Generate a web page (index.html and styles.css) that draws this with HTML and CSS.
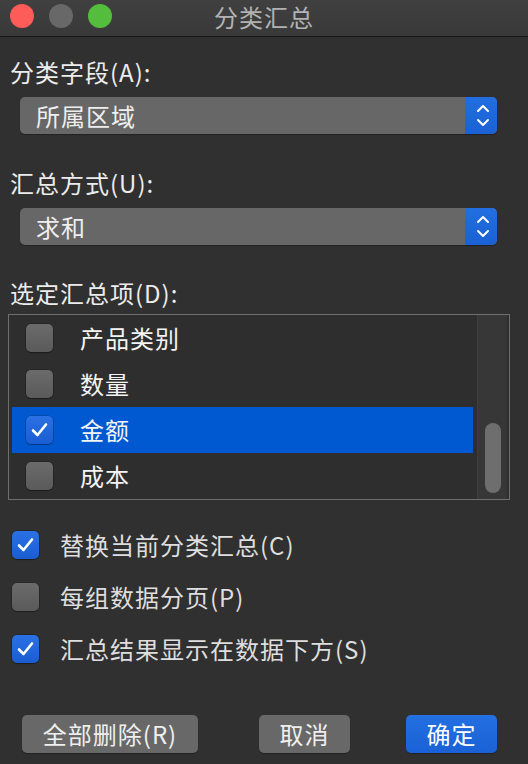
FILE: index.html
```html
<!DOCTYPE html>
<html lang="zh-CN">
<head>
<meta charset="utf-8">
<title>分类汇总</title>
<link rel="stylesheet" href="styles.css">
</head>
<body>
<div class="window">
  <div class="titlebar">
    <div class="lights">
      <span class="light red"></span>
      <span class="light gray"></span>
      <span class="light green"></span>
    </div>
    <div class="title">分类汇总</div>
  </div>
  <div class="content">
    <div class="label l1">分类字段(A):</div>
    <div class="select">
      <span class="select-text">所属区域</span>
      <span class="stepper">
        <svg width="32" height="37" viewBox="0 0 32 37"><polyline points="13,14 18,9 23,14" fill="none" stroke="#fff" stroke-width="2" stroke-linecap="round" stroke-linejoin="round"/><polyline points="13,23 18,28 23,23" fill="none" stroke="#fff" stroke-width="2" stroke-linecap="round" stroke-linejoin="round"/></svg>
      </span>
    </div>
    <div class="label l2">汇总方式(U):</div>
    <div class="select">
      <span class="select-text">求和</span>
      <span class="stepper">
        <svg width="32" height="37" viewBox="0 0 32 37"><polyline points="13,14 18,9 23,14" fill="none" stroke="#fff" stroke-width="2" stroke-linecap="round" stroke-linejoin="round"/><polyline points="13,23 18,28 23,23" fill="none" stroke="#fff" stroke-width="2" stroke-linecap="round" stroke-linejoin="round"/></svg>
      </span>
    </div>
    <div class="label l3">选定汇总项(D):</div>
    <div class="list">
      <div class="rows">
        <div class="row"><span class="cb"></span><span class="row-text">产品类别</span></div>
        <div class="row"><span class="cb"></span><span class="row-text">数量</span></div>
        <div class="row selected"><span class="cb checked"><svg width="27" height="28" viewBox="0 0 27 28"><polyline points="7,14.5 11.5,19 20,8.5" fill="none" stroke="#fff" stroke-width="2.6" stroke-linecap="round" stroke-linejoin="round"/></svg></span><span class="row-text">金额</span></div>
        <div class="row"><span class="cb"></span><span class="row-text">成本</span></div>
      </div>
      <div class="scrollbar"><div class="thumb"></div></div>
    </div>
    <div class="options">
      <div class="option"><span class="cb checked"><svg width="27" height="28" viewBox="0 0 27 28"><polyline points="7,14.5 11.5,19 20,8.5" fill="none" stroke="#fff" stroke-width="2.6" stroke-linecap="round" stroke-linejoin="round"/></svg></span><span class="opt-text">替换当前分类汇总(C)</span></div>
      <div class="option"><span class="cb"></span><span class="opt-text">每组数据分页(P)</span></div>
      <div class="option"><span class="cb checked"><svg width="27" height="28" viewBox="0 0 27 28"><polyline points="7,14.5 11.5,19 20,8.5" fill="none" stroke="#fff" stroke-width="2.6" stroke-linecap="round" stroke-linejoin="round"/></svg></span><span class="opt-text">汇总结果显示在数据下方(S)</span></div>
    </div>
    <div class="buttons">
      <button class="btn btn-delete">全部删除(R)</button>
      <button class="btn btn-cancel">取消</button>
      <button class="btn btn-ok">确定</button>
    </div>
  </div>
</div>
</body>
</html>
```

FILE: styles.css
```css
* { box-sizing: border-box; }
html, body { margin: 0; padding: 0; }
body {
  width: 528px;
  height: 764px;
  background: #303030;
  font-family: "Noto Sans CJK SC", "Noto Sans", sans-serif;
  color: #e6e6e6;
  overflow: hidden;
}
.window { width: 528px; height: 764px; display: flex; flex-direction: column; }
.titlebar {
  height: 37px;
  position: relative;
  background: linear-gradient(#404040, #393939);
  border-bottom: 1px solid #161616;
  display: flex;
  align-items: center;
  justify-content: center;
}
.lights {
  position: absolute;
  left: 10px;
  top: 4px;
  display: flex;
  gap: 15px;
}
.light { width: 24px; height: 24px; border-radius: 50%; display: block; }
.red { background: #fe5c58; }
.gray { background: #686868; }
.green { background: #54bd3d; }
.title {
  font-size: 24px;
  line-height: 30px;
  color: #b2b2b2;
  letter-spacing: 1px;
  margin-top: -2px;
}
.content { display: flex; flex-direction: column; padding-left: 10px; }
.label {
  font-size: 24px;
  line-height: 30px;
  letter-spacing: 1px;
  color: #ececec;
}
.l1 { margin-top: 20px; }
.l2 { margin-top: 34px; }
.l3 { margin-top: 33px; }
.select {
  margin-top: 10px;
  margin-left: 10px;
  width: 477px;
  height: 37px;
  background: #676767;
  border-radius: 5px;
  display: flex;
  align-items: center;
  box-shadow: 0 1px 1px rgba(0,0,0,0.3);
}
.select-text {
  flex: 1;
  padding-left: 16px;
  font-size: 24px;
  letter-spacing: 1px;
  line-height: 30px;
  color: #eeeeee;
}
.stepper {
  width: 32px;
  height: 37px;
  background: linear-gradient(#226ee0, #1a61d4);
  border-radius: 0 5px 5px 0;
  display: block;
}
.stepper svg { display: block; }
.list {
  margin-top: 6px;
  margin-left: -2px;
  width: 502px;
  height: 186px;
  border: 1px solid #6f6f6f;
  background: #2e2e2e;
  display: flex;
  padding: 0 2px 0 3px;
  overflow: hidden;
}
.rows { width: 461px; display: flex; flex-direction: column; }
.row {
  height: 46px;
  display: flex;
  align-items: center;
  padding-left: 14px;
}
.row.selected { background: #0059d1; }
.row .cb { margin-right: 27px; }
.row-text {
  font-size: 24px;
  letter-spacing: 1px;
  line-height: 30px;
  color: #f4f4f4;
}
.cb {
  width: 27px;
  height: 28px;
  border-radius: 5px;
  background: linear-gradient(#6b6b6b, #5a5a5a);
  box-shadow: 0 0 0 0.5px rgba(0,0,0,0.35), 0 1px 1px rgba(0,0,0,0.25);
  display: block;
  flex: none;
}
.cb.checked { background: linear-gradient(#2a71e4, #1a5dd2); }
.cb svg { display: block; }
.scrollbar {
  margin-left: 4px;
  width: 30px;
  height: 184px;
  background: #373737;
  border-left: 1px solid #3e3e3e;
  display: flex;
  flex-direction: column;
  justify-content: flex-end;
  align-items: center;
  padding-bottom: 6px;
}
.thumb {
  width: 16px;
  height: 70px;
  border-radius: 8px;
  background: #6e6e6e;
}
.options {
  margin-top: 31px;
  margin-left: 2px;
  display: flex;
  flex-direction: column;
  gap: 24px;
}
.option { display: flex; align-items: center; height: 28px; }
.option .cb { margin-right: 21px; }
.opt-text {
  font-size: 24px;
  letter-spacing: 1px;
  line-height: 30px;
  color: #dedede;
}
.buttons {
  margin-top: 52px;
  margin-left: 12px;
  display: flex;
}
.btn {
  height: 38px;
  border: none;
  border-radius: 5px;
  background: #686868;
  color: #efefef;
  font-family: "Noto Sans CJK SC", "Noto Sans", sans-serif;
  font-size: 24px;
  letter-spacing: 1px;
  line-height: 30px;
  padding: 0;
  box-shadow: 0 1px 1px rgba(0,0,0,0.3);
}
.btn-delete { width: 176px; margin-right: 61px; }
.btn-cancel { width: 91px; margin-right: 56px; }
.btn-ok { width: 91px; background: linear-gradient(#2370e2, #1a61d6); color: #ffffff; }
```
